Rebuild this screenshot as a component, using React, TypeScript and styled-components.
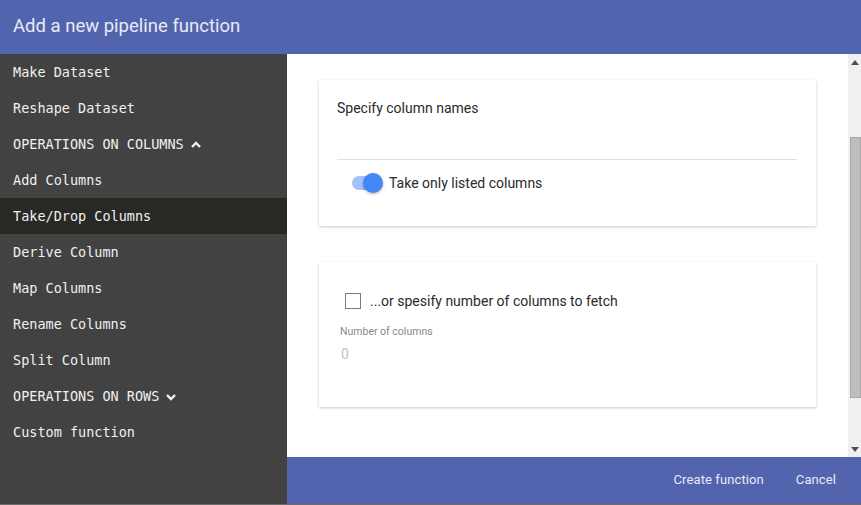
import React, { useState } from 'react'
import styled, { createGlobalStyle } from 'styled-components'

const Global = createGlobalStyle`
  html, body {
    margin: 0;
    padding: 0;
    background: #ffffff;
  }
  * {
    box-sizing: border-box;
  }
`

const Dialog = styled.div`
  width: 861px;
  height: 505px;
  display: flex;
  flex-direction: column;
  border-bottom: 1px solid #6a6a6a;
  overflow: hidden;
  font-family: Roboto, 'Liberation Sans', sans-serif;
`

const Header = styled.div`
  height: 54px;
  flex: none;
  background: #5264ae;
  color: #e8eaf6;
  font-size: 18.5px;
  display: flex;
  align-items: center;
  padding-left: 13px;
  padding-bottom: 3px;
`

const Body = styled.div`
  flex: 1;
  display: flex;
  min-height: 0;
`

const Sidebar = styled.nav`
  width: 287px;
  flex: none;
  background: #424242;
  display: flex;
  flex-direction: column;
`

const NavItem = styled.div<{ $active?: boolean }>`
  height: 36px;
  display: flex;
  align-items: center;
  gap: 6px;
  padding-left: 13px;
  font-family: 'DejaVu Sans Mono', 'Liberation Mono', monospace;
  font-size: 13.5px;
  color: #f0f0f0;
  background: ${p => (p.$active ? '#282824' : 'transparent')};
  cursor: pointer;
`

const Main = styled.div`
  flex: 1;
  display: flex;
  flex-direction: column;
  min-width: 0;
`

const ScrollArea = styled.div`
  flex: 1;
  display: flex;
  min-height: 0;
`

const Content = styled.div`
  flex: 1;
  padding: 26px 32px 0 32px;
  display: flex;
  flex-direction: column;
  gap: 36px;
`

const Card = styled.div<{ $height: number }>`
  height: ${p => p.$height}px;
  background: #fff;
  box-shadow: 0 1px 3px rgba(0, 0, 0, 0.14), 0 1px 2px rgba(0, 0, 0, 0.08);
  display: flex;
  flex-direction: column;
`

const CardTitle = styled.div`
  padding-top: 20px;
  font-size: 14px;
  color: #2a2a2a;
  height: 80px;
  border-bottom: 1px solid #e0e0e0;
  margin: 0 19px 0 18px;
`

const ToggleRow = styled.label`
  display: flex;
  align-items: center;
  gap: 7px;
  padding: 15px 0 0 33px;
  font-size: 14px;
  color: #2a2a2a;
`

const Track = styled.span<{ $on: boolean }>`
  position: relative;
  width: 30px;
  height: 14px;
  border-radius: 7px;
  background: ${p => (p.$on ? '#a3c1fa' : '#bdbdbd')};
`

const Thumb = styled.span<{ $on: boolean }>`
  position: absolute;
  top: -3px;
  left: ${p => (p.$on ? '11px' : '-2px')};
  width: 20px;
  height: 20px;
  border-radius: 50%;
  background: ${p => (p.$on ? '#4287f5' : '#f5f5f5')};
  box-shadow: 0 1px 3px rgba(0, 0, 0, 0.3);
`

const CheckRow = styled.label`
  display: flex;
  align-items: center;
  gap: 9px;
  padding: 31px 0 0 26px;
  font-size: 14px;
  color: #2a2a2a;
`

const Box = styled.span`
  width: 16px;
  height: 16px;
  border: 1px solid #7a7a7a;
  background: #fff;
`

const FieldLabel = styled.div`
  padding: 16px 0 0 21px;
  font-size: 10.5px;
  color: #8a8a8a;
`

const FieldValue = styled.div`
  padding: 8px 0 0 22px;
  font-size: 14px;
  color: #c2c2c2;
`

const Scrollbar = styled.div`
  width: 13px;
  flex: none;
  background: #f0f0f0;
  display: flex;
  flex-direction: column;
  align-items: flex-end;
`

const Arrow = styled.div`
  width: 13px;
  height: 16px;
  display: flex;
  align-items: center;
  justify-content: center;
`

const ScrollThumb = styled.div`
  width: 11px;
  height: 261px;
  margin-top: 67px;
  background: #bdbdbd;
  border: 1px solid #a9a9a9;
`

const Spacer = styled.div`
  flex: 1;
`

const Footer = styled.div`
  height: 47px;
  flex: none;
  background: #5264ae;
  display: flex;
  align-items: center;
  justify-content: flex-end;
  padding-right: 25px;
  padding-bottom: 2px;
  gap: 32px;
  color: #e8eaf6;
  font-size: 13px;
  letter-spacing: 0.1px;
`

const FooterButton = styled.span`
  cursor: pointer;
`

const Chevron = ({ up }: { up?: boolean }) => (
  <svg width="12" height="9" viewBox="0 0 12 9">
    <polyline
      points={up ? '2,7 6,3 10,7' : '2,3 6,7 10,3'}
      fill="none"
      stroke="#f2f2f2"
      strokeWidth="2.4"
    />
  </svg>
)

const items: { label: string; chevron?: 'up' | 'down' }[] = [
  { label: 'Make Dataset' },
  { label: 'Reshape Dataset' },
  { label: 'OPERATIONS ON COLUMNS', chevron: 'up' },
  { label: 'Add Columns' },
  { label: 'Take/Drop Columns' },
  { label: 'Derive Column' },
  { label: 'Map Columns' },
  { label: 'Rename Columns' },
  { label: 'Split Column' },
  { label: 'OPERATIONS ON ROWS', chevron: 'down' },
  { label: 'Custom function' },
]

export default function App() {
  const [active, setActive] = useState('Take/Drop Columns')
  const [onlyListed, setOnlyListed] = useState(true)

  return (
    <>
      <Global />
      <Dialog>
        <Header>Add a new pipeline function</Header>
        <Body>
          <Sidebar>
            {items.map(it => (
              <NavItem
                key={it.label}
                $active={it.label === active}
                onClick={() => setActive(it.label)}
              >
                {it.label}
                {it.chevron ? <Chevron up={it.chevron === 'up'} /> : null}
              </NavItem>
            ))}
          </Sidebar>
          <Main>
            <ScrollArea>
              <Content>
                <Card $height={146}>
                  <CardTitle>Specify column names</CardTitle>
                  <ToggleRow onClick={() => setOnlyListed(!onlyListed)}>
                    <Track $on={onlyListed}>
                      <Thumb $on={onlyListed} />
                    </Track>
                    Take only listed columns
                  </ToggleRow>
                </Card>
                <Card $height={145}>
                  <CheckRow>
                    <Box />
                    ...or spesify number of columns to fetch
                  </CheckRow>
                  <FieldLabel>Number of columns</FieldLabel>
                  <FieldValue>0</FieldValue>
                </Card>
              </Content>
              <Scrollbar>
                <Arrow>
                  <svg width="8" height="5" viewBox="0 0 8 5">
                    <polygon points="0,5 4,0 8,5" fill="#505050" />
                  </svg>
                </Arrow>
                <ScrollThumb />
                <Spacer />
                <Arrow>
                  <svg width="8" height="5" viewBox="0 0 8 5">
                    <polygon points="0,0 8,0 4,5" fill="#505050" />
                  </svg>
                </Arrow>
              </Scrollbar>
            </ScrollArea>
            <Footer>
              <FooterButton>Create function</FooterButton>
              <FooterButton>Cancel</FooterButton>
            </Footer>
          </Main>
        </Body>
      </Dialog>
    </>
  )
}
